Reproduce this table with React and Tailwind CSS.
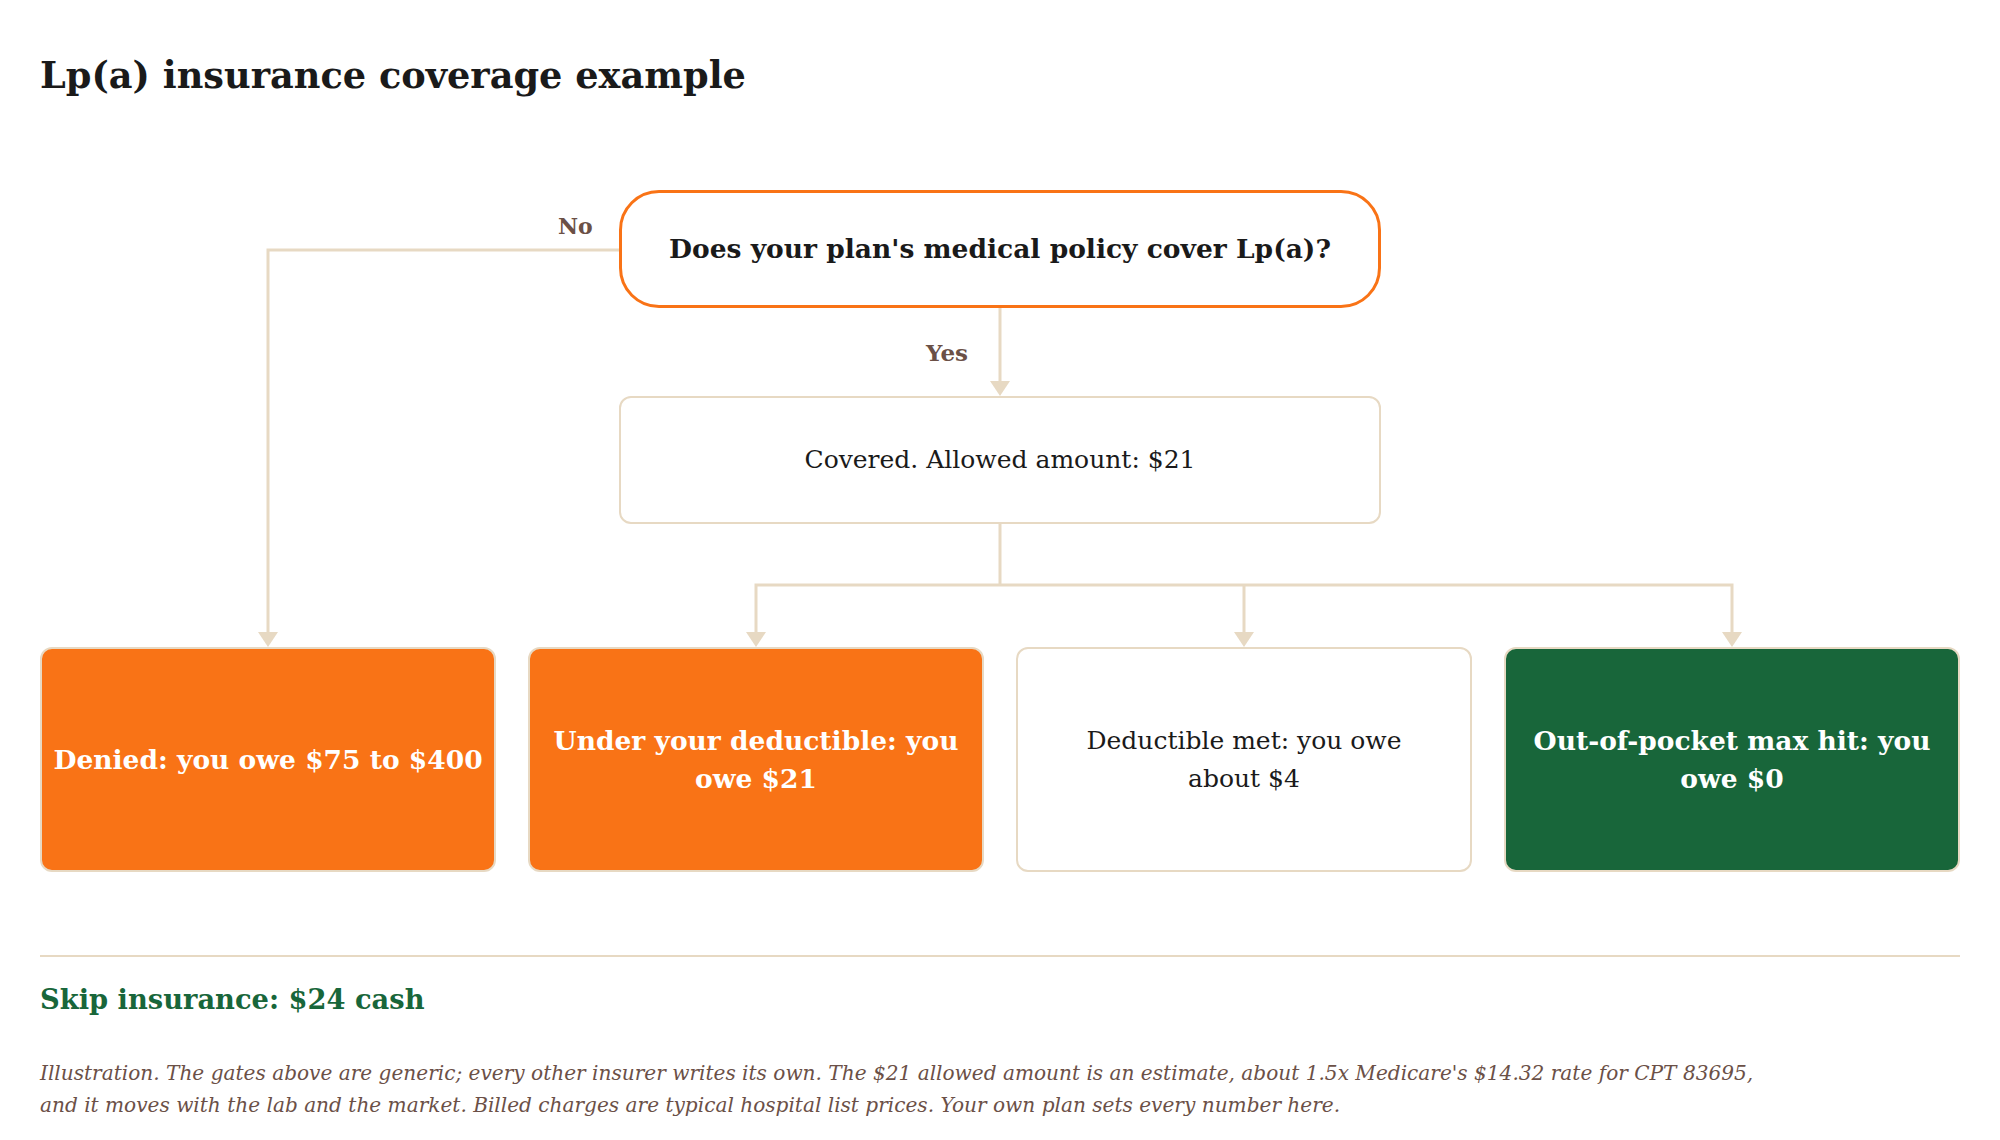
import React from 'react';

const LINE = '#e7d9c3';

function Connectors() {
  // diagram canvas is 1920 x 682; card centres at 228, 716, 1204, 1692
  const arrow = (x, y) => `${x - 10},${y - 15} ${x + 10},${y - 15} ${x},${y}`;
  return (
    <svg className="absolute inset-0 pointer-events-none" width="1920" height="682" viewBox="0 0 1920 682">
      <g stroke={LINE} strokeWidth="3" fill="none">
        <path d="M579 60 H228 V444" />
        <path d="M960 118 V193" />
        <path d="M960 334 V395" />
        <path d="M716 444 V395 H1692 V444" />
        <path d="M1204 395 V444" />
      </g>
      <g fill={LINE}>
        <polygon points={arrow(228, 457)} />
        <polygon points={arrow(960, 206)} />
        <polygon points={arrow(716, 457)} />
        <polygon points={arrow(1204, 457)} />
        <polygon points={arrow(1692, 457)} />
      </g>
    </svg>
  );
}

const outcomes = [
  { text: 'Denied: you owe $75 to $400', box: 'bg-[#f97316] text-white font-bold text-[26.5px]' },
  { text: 'Under your deductible: you owe $21', box: 'bg-[#f97316] text-white font-bold text-[26.5px]' },
  { text: 'Deductible met: you owe about $4', box: 'bg-white text-[#1a1a1a] font-normal text-[25px]', narrow: true },
  { text: 'Out-of-pocket max hit: you owe $0', box: 'bg-[#18663a] text-white font-bold text-[26.5px]' },
];

export default function App() {
  return (
    <div className="min-h-screen bg-white px-[40px] pt-[52px] pb-[20px] font-['DejaVu_Serif',Georgia,serif]">
      <h1 className="text-[36.7px] leading-[48px] font-bold text-[#1a1a1a]">Lp(a) insurance coverage example</h1>

      {/* Flowchart */}
      <div className="relative mt-[90px] h-[682px] w-[1920px]">
        <Connectors />

        <span className="absolute left-[518px] top-[24px] text-[22px] leading-[24px] font-bold text-[#6b5046]">No</span>
        <span className="absolute left-[886px] top-[151px] text-[23px] leading-[24px] font-bold text-[#6b5046]">Yes</span>

        <div className="relative mx-auto flex h-[118px] w-[762px] items-center justify-center rounded-[40px] border-[3px] border-[#f97316] bg-white">
          <p className="text-[26.5px] leading-[34px] font-bold text-[#1a1a1a]">Does your plan's medical policy cover Lp(a)?</p>
        </div>

        <div className="relative mx-auto mt-[88px] flex h-[128px] w-[762px] items-center justify-center rounded-[12px] border-2 border-[#e7d9c3] bg-white">
          <p className="text-[25px] leading-[34px] text-[#1a1a1a]">Covered. Allowed amount: $21</p>
        </div>

        <div className="relative mt-[123px] grid grid-cols-4 gap-[32px]">
          {outcomes.map((o) => (
            <div
              key={o.text}
              className={`flex h-[225px] items-center justify-center rounded-[12px] border-2 border-[#e7d9c3] px-[10px] text-center leading-[38px] ${o.box}`}
            >
              <p className={o.narrow ? 'max-w-[370px]' : ''}>{o.text}</p>
            </div>
          ))}
        </div>
      </div>

      <div className="mt-[83px] h-[2px] w-full bg-[#e7d9c3]" />

      <p className="mt-[24px] text-[27.3px] leading-[36px] font-bold text-[#18663a]">Skip insurance: $24 cash</p>

      <p className="mt-[40px] text-[20.1px] leading-[32px] italic text-[#6b5047]">
        Illustration. The gates above are generic; every other insurer writes its own. The $21 allowed amount is an estimate, about 1.5x Medicare's $14.32 rate for CPT 83695,
        <br />
        and it moves with the lab and the market. Billed charges are typical hospital list prices. Your own plan sets every number here.
      </p>
    </div>
  );
}
